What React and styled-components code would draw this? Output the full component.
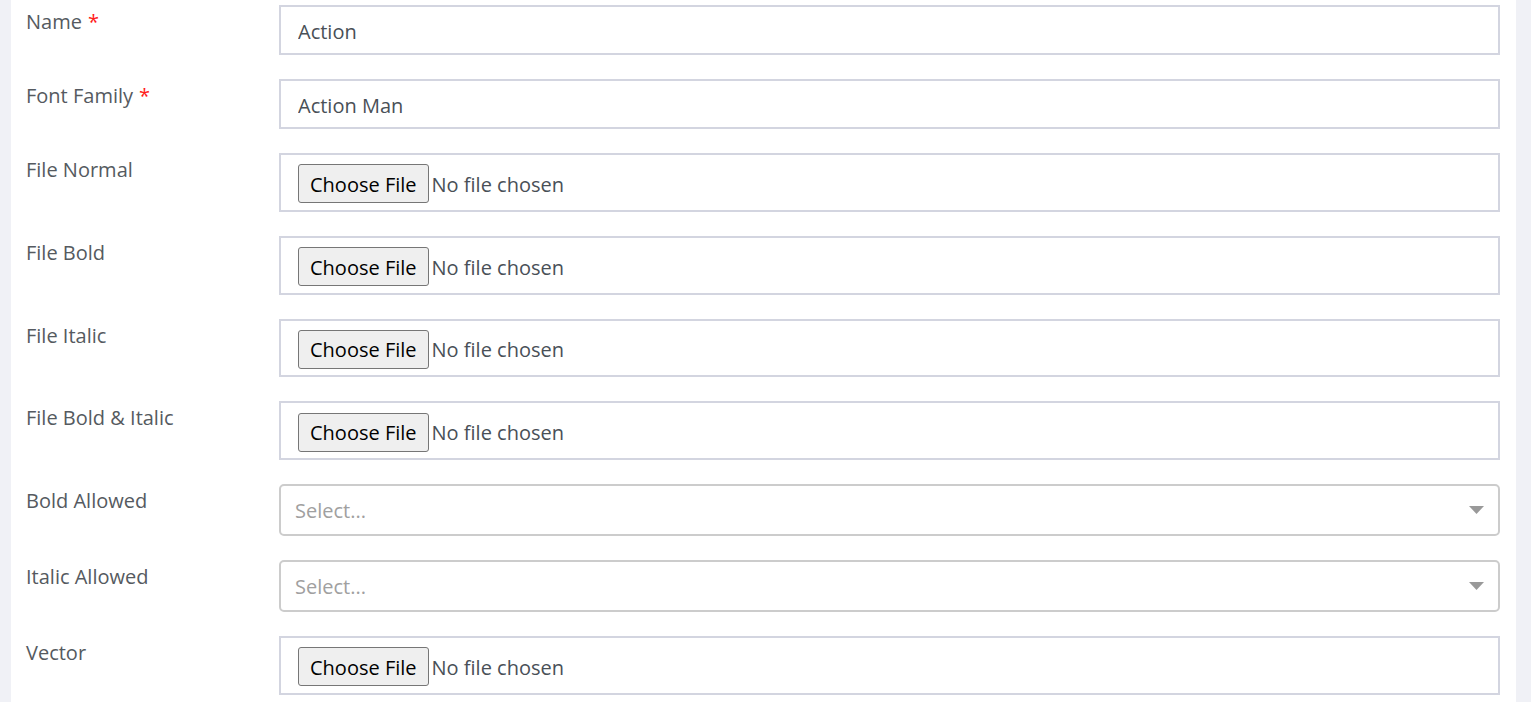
import React from "react";
import styled, { createGlobalStyle } from "styled-components";

const Global = createGlobalStyle`
  html, body { margin: 0; padding: 0; background: #f0f1f6; }
  body { font-family: "Open Sans", "Noto Sans", "Liberation Sans", sans-serif; overflow: hidden; }
  * { box-sizing: border-box; }
`;

const Page = styled.div`
  display: flex;
  min-height: 100vh;
  padding: 0 15px 0 11px;
`;

const Panel = styled.form`
  flex: 1;
  background: #ffffff;
  padding: 5px 16px 0 15px;
  display: flex;
  flex-direction: column;
  gap: 24px;
`;

const Row = styled.div`
  display: grid;
  grid-template-columns: 253px 1fr;
  align-items: start;
`;

const Label = styled.label`
  font-size: 20px;
  line-height: 30px;
  color: #555a60;
  margin-top: 2px;
`;

const Req = styled.span`
  color: #ff1a1a;
  margin-left: 6px;
`;

const TextInput = styled.input`
  height: 50px;
  width: 100%;
  border: 2px solid #d3d5e0;
  border-radius: 0;
  padding: 3px 17px 0;
  font: inherit;
  font-size: 20px;
  color: #495057;
  background: #fff;
  outline: none;
`;

const FileBox = styled.div`
  height: 58.75px;
  border: 2px solid #d3d5e0;
  padding: 3px 17px 0;
  display: flex;
  align-items: center;
  gap: 3px;
  background: #fff;
`;

const FileButton = styled.button`
  height: 39px;
  padding: 1px 11px 0;
  border: 1px solid #767676;
  border-radius: 3px;
  background: #efefef;
  color: #000;
  font: inherit;
  font-size: 20px;
  cursor: pointer;
`;

const FileText = styled.span`
  font-size: 20px;
  color: #495057;
  padding-top: 1px;
`;

const SelectBox = styled.div`
  height: 52px;
  border: 2px solid #cccccc;
  border-radius: 5px;
  padding: 0 14px 0 14px;
  display: flex;
  align-items: center;
  justify-content: space-between;
  background: #fff;
`;

const Placeholder = styled.span`
  font-size: 20px;
  color: #a0a0a0;
  padding-top: 1px;
`;

const Caret = styled.svg`
  width: 15px;
  height: 8px;
  fill: #999999;
`;

const FileField = () => (
  <FileBox>
    <FileButton type="button">Choose File</FileButton>
    <FileText>No file chosen</FileText>
  </FileBox>
);

const SelectField = () => (
  <SelectBox>
    <Placeholder>Select...</Placeholder>
    <Caret viewBox="0 0 15 8">
      <path d="M0 0 L15 0 L7.5 8 Z" />
    </Caret>
  </SelectBox>
);

const fields = [
  { label: "Name", req: true, type: "text", value: "Action" },
  { label: "Font Family", req: true, type: "text", value: "Action Man" },
  { label: "File Normal", type: "file" },
  { label: "File Bold", type: "file" },
  { label: "File Italic", type: "file" },
  { label: "File Bold & Italic", type: "file" },
  { label: "Bold Allowed", type: "select" },
  { label: "Italic Allowed", type: "select" },
  { label: "Vector", type: "file" },
];

export default function App() {
  return (
    <>
      <Global />
      <Page>
        <Panel>
          {fields.map((f) => (
            <Row key={f.label}>
              <Label>
                {f.label}
                {f.req && <Req>*</Req>}
              </Label>
              {f.type === "text" && <TextInput defaultValue={f.value} />}
              {f.type === "file" && <FileField />}
              {f.type === "select" && <SelectField />}
            </Row>
          ))}
        </Panel>
      </Page>
    </>
  );
}
